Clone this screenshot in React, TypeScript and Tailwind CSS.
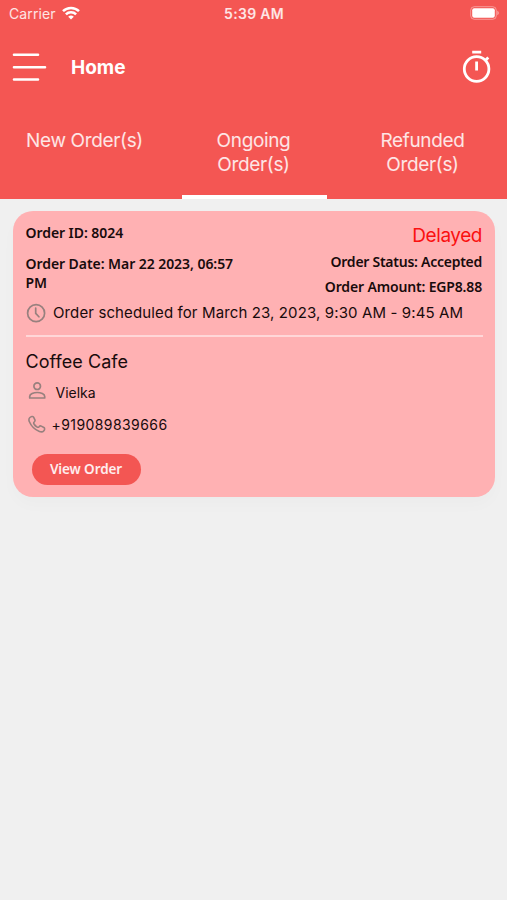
import React from "react";

const StatusBar = () => {
  return (
    <div className="grid grid-cols-3 items-center h-[27px] pl-[9px] pr-[8px] text-[14px] leading-none text-white/85">
      <div className="flex items-center gap-[6px]">
        <span className="tracking-[0.1px]">Carrier</span>
        <svg className="mb-px" width="18" height="14" viewBox="0 0 18 14" fill="none" stroke="white" strokeWidth="2.5">
          <path d="M1 5.2a11.3 11.3 0 0 1 16 0" />
          <path d="M3.9 8.3a7.2 7.2 0 0 1 10.2 0" />
          <path d="M9 13.6 6.2 10.8a4 4 0 0 1 5.6 0z" fill="white" stroke="none" />
        </svg>
      </div>
      <span className="text-center text-[14px] font-semibold tracking-[0.3px] whitespace-nowrap">5:39 AM</span>
      <svg className="justify-self-end mb-px" width="30" height="14" viewBox="0 0 30 14" fill="none">
        <rect x="1.7" y="0.7" width="25.6" height="12.6" rx="3.6" stroke="white" strokeOpacity="0.4" />
        <rect x="3.2" y="2.2" width="22.6" height="9.6" rx="2" fill="white" />
        <path d="M28.3 4.8v4.4c1-.4 1.5-1.2 1.5-2.2s-.5-1.8-1.5-2.2z" fill="white" fillOpacity="0.45" />
      </svg>
    </div>
  );
};

const NavBar = () => {
  return (
    <div className="flex items-center h-[82px] pl-[12px] pr-[15px] text-white">
      <svg className="mb-[2px]" width="36" height="30" viewBox="0 0 36 30" stroke="white" strokeWidth="2.6" strokeLinecap="round">
        <path d="M2 2.8h24M2 15.300h31M2 27.500h24" />
      </svg>
      <h1 className="ml-[23px] pt-px text-[19px] font-bold">Home</h1>
      <svg className="ml-auto mb-[3px]" width="30" height="34" viewBox="0 0 30 34" fill="none" stroke="white" strokeWidth="2.8">
        <circle cx="14.6" cy="19" r="12.3" />
        <path d="M10.2 2.2h9M14.6 11.6v9M23.3 10.5l3-3" />
      </svg>
    </div>
  );
};

const tabs = ["New Order(s)", "Ongoing Order(s)", "Refunded Order(s)"];

const Tabs = () => {
  return (
    <div className="grid grid-cols-3 h-[90px] text-center text-[19px] leading-[24px] tracking-[-0.35px] text-white/85">
      {tabs.map((tab, index) => (
        <div key={tab} className="flex flex-col items-center justify-between pt-[20px]">
          <span className={index === 0 ? "whitespace-nowrap" : "w-[100px]"}>{tab}</span>
          {index === 1 && <span className="h-[4px] w-[145px] ml-px bg-white" />}
        </div>
      ))}
    </div>
  );
};

const ClockIcon = () => (
  <svg width="21" height="21" viewBox="0 0 21 21" fill="none" stroke="#98807e" strokeWidth="1.7" strokeLinecap="round">
    <circle cx="10.1" cy="10.2" r="8.5" />
    <path d="M9.7 5.2v5.1l3.2 3.5" />
  </svg>
);

const PersonIcon = () => (
  <svg className="mb-[3px]" width="19" height="19" viewBox="0 0 19 19" fill="none" stroke="#98807e" strokeWidth="1.7" strokeLinejoin="round">
    <circle cx="9.2" cy="5.2" r="3.3" />
    <path d="M1.700 17v-1.600c0-2.300 3.900-3.900 7.500-3.900s7.500 1.600 7.500 3.900V17z" />
  </svg>
);

const PhoneIcon = () => (
  <svg width="19" height="19" viewBox="0 0 19 19" fill="none" stroke="#98807e" strokeWidth="1.6" strokeLinejoin="round">
    <path d="M1.900 2.500c1.200-1 2.900-1.500 3.700-.4l1.300 2.800c.3.8 0 1.500-.7 2.100-.8.7-.7 1.200-.2 2 .8 1.400 1.800 2.300 3.200 3.100.8.4 1.300.3 1.900-.4.600-.8 1.400-1 2.200-.6l2.600 1.400c1 .6.9 2.100 0 3.200-1.100 1.300-2.700 1.500-4.500.8C6.800 14.700 3.300 11.300 1.400 6.800.700 5.100.800 3.500 1.900 2.500z" />
  </svg>
);

const OrderCard = () => {
  return (
    <article className="h-[286px] rounded-[20px] bg-[#ffb1b3] pl-[12.5px] pr-[12px] text-[#180b0c] shadow-[0_8px_16px_rgba(0,0,0,0.02)]">
      <div className="flex justify-between h-[88px] pt-[12px] font-['Noto_Sans',sans-serif] text-[14px] font-semibold">
        <div className="w-[225px] tracking-[-0.06px]">
          <p className="leading-[20px]">Order ID: 8024</p>
          <p className="mt-[11px] leading-[19px]">Order Date: Mar 22 2023, 06:57 PM</p>
        </div>
        <div className="mr-px text-right whitespace-nowrap">
          <p className="pt-px font-['Inter',sans-serif] text-[19px] font-normal leading-[24px] tracking-[-0.45px] text-[#fa1010]">Delayed</p>
          <p className="mt-[4px] leading-[20px] tracking-[-0.26px]">Order Status: Accepted</p>
          <p className="mt-[5px] leading-[20px] tracking-[-0.16px]">Order Amount: EGP8.88</p>
        </div>
      </div>
      <div className="flex items-center h-[28px] whitespace-nowrap">
        <ClockIcon />
        <span className="ml-[6.5px] text-[15px] tracking-[0.12px]">Order scheduled for March 23, 2023, 9:30 AM - 9:45 AM</span>
      </div>
      <div className="mt-[8px] h-[2px] bg-[#ffd7d8]" />
      <h2 className="mt-[13px] text-[18px] leading-[24px] tracking-[0.05px]">Coffee Cafe</h2>
      <div className="mt-[7px] flex items-center h-[22px] pl-[2px] text-[14px]">
        <PersonIcon />
        <span className="ml-[9px]">Vielka</span>
      </div>
      <div className="mt-[10px] flex items-center h-[22px] pl-[2px] text-[14px]">
        <PhoneIcon />
        <span className="ml-[5px] tracking-[0.42px]">+919089839666</span>
      </div>
      <button className="mt-[19px] ml-[6px] block h-[31px] w-[109px] rounded-full bg-[#f35653] font-['Noto_Sans',sans-serif] text-[13.5px] font-semibold tracking-[-0.1px] text-white/90">
        View Order
      </button>
    </article>
  );
};

export default function App() {
  return (
    <div className="h-[900px] w-[507px] overflow-hidden bg-[#f0f0f0] font-['Inter',sans-serif]">
      <header className="bg-[#f45653]">
        <StatusBar />
        <NavBar />
        <Tabs />
      </header>
      <main className="pt-[12px] pl-[13px] pr-[12px]">
        <OrderCard />
      </main>
    </div>
  );
}
